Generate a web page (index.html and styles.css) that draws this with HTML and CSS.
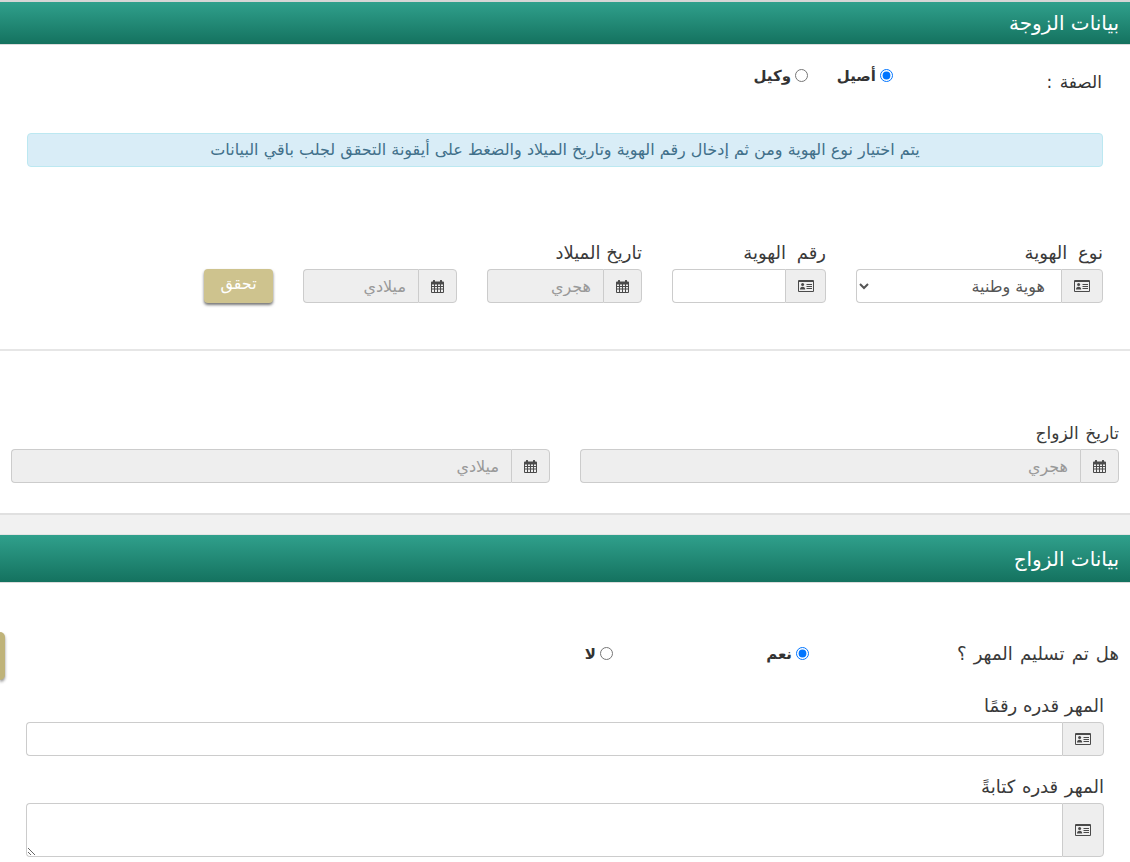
FILE: index.html
```html
<!DOCTYPE html>
<html lang="ar" dir="rtl">
<head>
<meta charset="utf-8">
<title>بيانات الزوجة</title>
<link rel="stylesheet" href="styles.css">
</head>
<body>
<svg class="defs" aria-hidden="true">
  <symbol id="idcard" viewBox="0 0 16 12">
    <path fill-rule="evenodd" d="M1 0h14a1 1 0 0 1 1 1v10a1 1 0 0 1-1 1H1a1 1 0 0 1-1-1V1a1 1 0 0 1 1-1zm0 2v9h14V2z"/>
    <circle cx="4.600" cy="4.600" r="1.500"/>
    <path d="M2 9.600c0-1.800 1-2.800 2.600-2.800S7.200 7.800 7.200 9.600z"/>
    <path d="M8.500 4H14v1H8.500zM8.500 6H14v1H8.500zM8.500 8H14v1H8.500z"/>
  </symbol>
  <symbol id="cal" viewBox="0 0 13 13">
    <path fill-rule="evenodd" d="M2.500 0h1a.5.5 0 0 1 .5.500V1.500h5V.5a.5.5 0 0 1 .5-.5h1a.5.5 0 0 1 .5.500v1H12a1 1 0 0 1 1 1V12a1 1 0 0 1-1 1H1a1 1 0 0 1-1-1V2.500a1 1 0 0 1 1-1h1V.5a.5.5 0 0 1 .5-.5zM1 4.500V6h2V4.500zm3 0V6h2V4.500zm3 0V6h2V4.500zm3 0V6h2V4.500zM1 7v1.500h2V7zm3 0v1.500h2V7zm3 0v1.500h2V7zm3 0v1.500h2V7zM1 9.500V12h2V9.500zm3 0V12h2V9.500zm3 0V12h2V9.500zm3 0V12h2V9.500z"/>
  </symbol>
</svg>

<div class="topline"></div>
<h2 class="band band-first">بيانات الزوجة</h2>

<section class="wife">
  <div class="sifa">
    <div class="sifa-label">الصفة :</div>
    <label class="opt opt-asil"><input type="radio" name="sifa" checked><b>أصيل</b></label>
    <label class="opt"><input type="radio" name="sifa"><b>وكيل</b></label>
  </div>

  <div class="alert">يتم اختيار نوع الهوية ومن ثم إدخال رقم الهوية وتاريخ الميلاد والضغط على أيقونة التحقق لجلب باقي البيانات</div>

  <div class="fields">
    <div class="field w-type">
      <label class="lbl">نوع الهوية</label>
      <div class="group">
        <span class="addon a42"><svg class="ico-id"><use href="#idcard"/></svg></span>
        <select class="ctl sel"><option>هوية وطنية</option></select>
      </div>
    </div>
    <div class="field w-num">
      <label class="lbl">رقم الهوية</label>
      <div class="group">
        <span class="addon a41"><svg class="ico-id"><use href="#idcard"/></svg></span>
        <input class="ctl" type="text">
      </div>
    </div>
    <div class="field w-date">
      <label class="lbl">تاريخ الميلاد</label>
      <div class="group">
        <span class="addon a39"><svg class="ico-cal"><use href="#cal"/></svg></span>
        <input class="ctl dis" type="text" placeholder="هجري" disabled>
      </div>
    </div>
    <div class="field w-date2">
      <div class="group">
        <span class="addon a39"><svg class="ico-cal"><use href="#cal"/></svg></span>
        <input class="ctl dis" type="text" placeholder="ميلادي" disabled>
      </div>
    </div>
    <button class="verify" type="button">تحقق</button>
  </div>
</section>

<hr class="rule">

<section class="marriage">
  <label class="lbl">تاريخ الزواج</label>
  <div class="pair">
    <div class="group">
      <span class="addon a39"><svg class="ico-cal"><use href="#cal"/></svg></span>
      <input class="ctl dis" type="text" placeholder="هجري" disabled>
    </div>
    <div class="group">
      <span class="addon a39"><svg class="ico-cal"><use href="#cal"/></svg></span>
      <input class="ctl dis" type="text" placeholder="ميلادي" disabled>
    </div>
  </div>
</section>

<div class="gutter"></div>
<h2 class="band band-second">بيانات الزواج</h2>

<section class="mahr">
  <button class="clipped" type="button" aria-label="زر"></button>
  <div class="ask">
    <div class="ask-label">هل تم تسليم المهر ؟</div>
    <label class="opt opt-yes"><input type="radio" name="mahr" checked><b>نعم</b></label>
    <label class="opt"><input type="radio" name="mahr"><b>لا</b></label>
  </div>
  <label class="lbl">المهر قدره رقمًا</label>
  <div class="group">
    <span class="addon a42"><svg class="ico-id"><use href="#idcard"/></svg></span>
    <input class="ctl" type="text">
  </div>
  <label class="lbl lbl-gap">المهر قدره كتابةً</label>
  <div class="group group-tall">
    <span class="addon a42"><svg class="ico-id"><use href="#idcard"/></svg></span>
    <textarea class="ctl area"></textarea>
  </div>
</section>
</body>
</html>
```
FILE: styles.css
```css
* { box-sizing: border-box; }
html, body { margin: 0; padding: 0; }
body {
  background: #fff;
  color: #333;
  font-family: "DejaVu Sans", "Noto Sans", sans-serif;
  font-size: 16px;
  width: 1130px;
  height: 862px;
  overflow: hidden;
}
.defs { display: none; }
.topline { height: 2px; background: #d6d6d6; }
.band {
  margin: 0;
  color: #fff;
  font-weight: 400;
  font-size: 20px;
  background: linear-gradient(to bottom, #30a08c, #14725f);
  border-bottom: 1px solid #dcdcdc;
  padding-right: 11px;
  display: flex;
  align-items: center;
}
.band-first { height: 43px; }
.band-second { height: 48px; }

.wife { padding: 0 27px; height: 304px; }
.sifa { display: flex; height: 88px; }
.sifa-label { width: 210px; padding-top: 28px; padding-right: 1px; font-size: 17px; line-height: 18px; word-spacing: 2px; }
.opt {
  display: flex;
  align-items: flex-start;
  gap: 4px;
  color: #333;
  font-size: 15px;
  line-height: 18px;
}
.sifa .opt { padding-top: 22px; }
.opt-asil { width: 85px; }
.opt input { margin: 2px 0 0; width: 13px; height: 13px; accent-color: #0075ff; }
.opt b { font-weight: 700; }

.alert {
  height: 34px;
  line-height: 32px;
  background: #d9edf7;
  border: 1px solid #bce8f1;
  border-radius: 4px;
  color: #41708a;
  font-size: 16px;
  text-align: center;
}

.fields { display: flex; align-items: flex-end; gap: 30px; margin-top: 73px; }
.lbl { display: block; font-size: 18px; line-height: 20px; height: 29px; padding-top: 3px; color: #3a3a3a; }
.w-type { width: 247px; }
.w-num { width: 154px; }
.w-date { width: 155px; }
.w-date2 { width: 154px; }
.w-type .lbl, .w-num .lbl { word-spacing: 5px; }

.group { display: flex; height: 34px; }
.addon {
  flex: none;
  display: flex;
  align-items: center;
  justify-content: center;
  background: #eee;
  border: 1px solid #ccc;
  border-radius: 0 4px 4px 0;
}
.a42 { width: 42px; }
.a41 { width: 41px; }
.a39 { width: 39px; }
.ico-id { width: 16px; height: 12px; fill: #4a4a4a; }
.ico-cal { width: 13px; height: 13px; fill: #4a4a4a; }
.ctl {
  flex: 1;
  min-width: 0;
  height: 100%;
  margin: 0;
  border: 1px solid #ccc;
  border-right: 0;
  border-radius: 4px 0 0 4px;
  background: #fff;
  color: #555;
  font-family: inherit;
  font-size: 16px;
  padding: 0 12px;
  outline: none;
}
.sel { padding: 0 12px 0 0; }
.dis { background: #eee; }
.dis::placeholder { color: #999; opacity: 1; }
.area { resize: vertical; display: block; }

.verify {
  width: 69px;
  height: 34px;
  border: 0;
  border-radius: 4px;
  background: #cec38e;
  color: #fff;
  font-family: inherit;
  font-size: 16px;
  box-shadow: 0 2px 3px rgba(0,0,0,.55);
  padding: 0 0 5px;
}

.rule { margin: 0; border: 0; border-top: 2px solid #e6e6e6; height: 2px; }
.marriage { padding: 72px 11px 0; height: 162px; }
.marriage .lbl { height: 26px; padding-top: 0; font-size: 17px; word-spacing: 1px; }
.pair { display: grid; grid-template-columns: 539px 539px; gap: 30px; }

.gutter { height: 22px; background: #f1f1f1; border-top: 2px solid #e0e0e0; border-bottom: 1px solid #e4e4e4; }

.mahr { position: relative; padding: 0 26px; }
.clipped {
  position: absolute;
  left: 0;
  top: 49px;
  width: 5px;
  height: 48px;
  border: 0;
  border-radius: 0 6px 6px 0;
  background: #bfb379;
  box-shadow: 0 2px 3px rgba(0,0,0,.45);
  padding: 0;
}
.ask { display: flex; height: 113px; margin-right: -15px; padding-top: 61px; }
.ask-label { width: 310px; font-size: 18px; line-height: 20px; word-spacing: 1.5px; color: #3a3a3a; }
.opt-yes { width: 196px; }
.ask .opt { padding-top: 1px; }
.mahr .lbl { height: 26px; padding-top: 0; }
.mahr .lbl-gap { margin-top: 21px; word-spacing: 1px; }
.group-tall { height: 54px; }
```
